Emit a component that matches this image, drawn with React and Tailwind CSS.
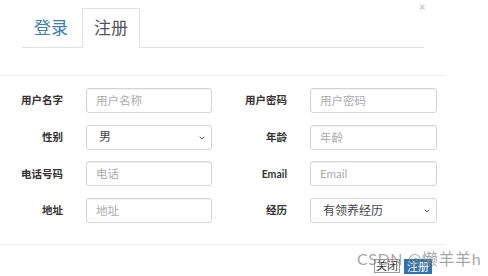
import { ChevronDown } from 'lucide-react';

const font = { fontFamily: 'Lato, "Noto Sans CJK SC", sans-serif' };

function Label({ children }) {
  return <label className="text-right text-[10.5px] font-bold text-[#333] leading-none">{children}</label>;
}

function Input({ placeholder }) {
  return (
    <input
      placeholder={placeholder}
      className="h-[25px] w-full rounded-[3px] border border-[#d4d4d4] bg-white px-[9px] text-[11.5px] text-[#555] placeholder:text-[#aaa] outline-none shadow-[inset_0_1px_1px_rgba(0,0,0,0.05)]"
    />
  );
}

function Select({ value }) {
  return (
    <div className="relative h-[25px] w-full rounded-[3px] border border-[#d4d4d4] bg-white flex items-center pl-[12px] text-[12px] text-[#444]">
      <span>{value}</span>
      <ChevronDown className="absolute right-[5px] top-[8px] w-[8px] h-[8px] text-[#555]" strokeWidth={3} />
    </div>
  );
}

export default function App() {
  return (
    <div className="relative w-[488px] h-[276px] overflow-hidden bg-white" style={font}>
      <div className="w-[445px]">
        <div className="relative h-[76px] border-b border-[#ececec] pt-[8px] pl-[22px]">
          <span className="absolute left-[419px] top-[-1px] text-[11px] text-[#c4c4c4] font-bold">×</span>
          <ul className="flex w-[402px] border-b border-[#e2e2e2]">
            <li className="h-[40px] px-[12px] mr-[2px] flex items-center text-[17px] text-[#3b7db8] -mb-px">登录</li>
            <li className="h-[40px] px-[11px] flex items-center text-[17px] text-[#555] bg-white border border-[#e2e2e2] border-b-white -mb-px">注册</li>
          </ul>
        </div>
        <div className="grid grid-cols-[63px_126px_52px_127px] gap-x-[23px] gap-y-[11.7px] items-center pt-[12px] pb-[22px] h-[169px] border-b border-[#ececec] content-start">
          <Label>用户名字</Label>
          <Input placeholder="用户名称" />
          <Label>用户密码</Label>
          <Input placeholder="用户密码" />
          <Label>性别</Label>
          <Select value="男" />
          <Label>年龄</Label>
          <Input placeholder="年龄" />
          <Label>电话号码</Label>
          <Input placeholder="电话" />
          <Label>Email</Label>
          <Input placeholder="Email" />
          <Label>地址</Label>
          <Input placeholder="地址" />
          <Label>经历</Label>
          <Select value="有领养经历" />
        </div>
        <div className="flex justify-end gap-[4px] pt-[14px] pr-[13px]">
          <button className="h-[14px] px-[1px] border border-[#999] bg-white text-[11px] leading-[12px] text-[#333]">关闭</button>
          <button className="h-[15px] px-[3px] bg-[#2f72ad] text-[11px] leading-[15px] text-white">注册</button>
        </div>
      </div>
      <div className="absolute left-[357px] top-[247px] text-[16px] tracking-[0.6px] text-[#888]/75 whitespace-nowrap pointer-events-none">CSDN @懒羊羊h</div>
    </div>
  );
}
